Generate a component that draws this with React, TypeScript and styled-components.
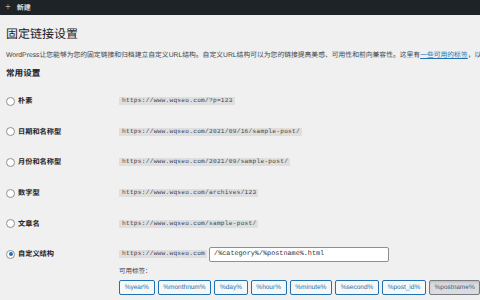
import * as React from "react";
import styled, { createGlobalStyle } from "styled-components";

const GlobalStyle = createGlobalStyle`
  html, body {
    margin: 0;
    padding: 0;
    background: #f0f0f1;
    overflow: hidden;
  }
  body {
    width: 480px;
    height: 300px;
    font-family: "Liberation Sans", "Noto Sans CJK SC", sans-serif;
    color: #3c434a;
    text-rendering: geometricPrecision;
  }
`;

const AdminBar = styled.div`
  height: 15px;
  background: #1d2327;
  display: flex;
  align-items: center;
  padding-left: 5px;
  gap: 6px;
  color: #dcdcde;
  font-size: 7px;
  font-weight: bold;
`;

const Plus = styled.span`
  font-size: 10px;
  font-weight: normal;
  line-height: 1;
  color: #a7aaad;
`;

const Content = styled.div`
  padding: 0 0 0 6px;
`;

const Title = styled.h1`
  margin: 12px 0 0;
  font-size: 12px;
  font-weight: 400;
  line-height: 14px;
  color: #1d2327;
`;

const Description = styled.p`
  margin: 10px 0 0;
  font-size: 6.8px;
  line-height: 9px;
  white-space: nowrap;
`;

const Link = styled.a`
  color: #2271b1;
  text-decoration: underline;
`;

const SectionTitle = styled.h2`
  margin: 8px 0 0;
  font-size: 8.6px;
  font-weight: 700;
  line-height: 11px;
  color: #1d2327;
`;

const Options = styled.div`
  margin-top: 7px;
  display: grid;
  grid-template-columns: 113px 1fr;
  grid-auto-rows: auto;
`;

const LabelCell = styled.label`
  display: flex;
  align-items: center;
  height: 30.6px;
  gap: 3px;
  font-size: 7.2px;
  font-weight: 700;
  color: #1d2327;
`;

const Radio = styled.span<{ $checked?: boolean }>`
  width: 7px;
  height: 7px;
  border-radius: 50%;
  border: 1px solid #8c8f94;
  background: #fff;
  display: flex;
  align-items: center;
  justify-content: center;
  &::after {
    content: "";
    width: 4px;
    height: 4px;
    border-radius: 50%;
    background: ${(p) => (p.$checked ? "#2271b1" : "transparent")};
  }
`;

const ValueCell = styled.div`
  display: flex;
  align-items: center;
  height: 30.6px;
`;

const Code = styled.code`
  font-family: "Liberation Mono", "DejaVu Sans Mono", monospace;
  font-size: 6.15px;
  letter-spacing: 0.27px;
  line-height: 8px;
  height: 8px;
  padding: 0 2px 0 3px;
  background: #dfdfe0;
  color: #3c434a;
  white-space: nowrap;
`;

const CustomCell = styled.div`
  display: flex;
  flex-direction: column;
`;

const CustomLine = styled.div`
  display: flex;
  align-items: center;
  gap: 2px;
  height: 30.6px;
`;

const StructureInput = styled.div`
  width: 170px;
  height: 13px;
  padding: 0 4px;
  background: #fff;
  border: 1px solid #8c8f94;
  border-radius: 2px;
  display: flex;
  align-items: center;
  font-family: "Liberation Mono", "DejaVu Sans Mono", monospace;
  font-size: 6.8px;
  color: #2c3338;
  white-space: nowrap;
`;

const TagsLabel = styled.div`
  margin-top: -3px;
  font-size: 6.5px;
  line-height: 9px;
  color: #3c434a;
`;

const Tags = styled.div`
  margin-top: 4px;
  display: flex;
  gap: 3px;
  white-space: nowrap;
`;

const TagButton = styled.span<{ $active?: boolean }>`
  display: inline-flex;
  align-items: center;
  height: 13px;
  padding: 0 4.7px;
  border: 1px solid ${(p) => (p.$active ? "#787c82" : "#2271b1")};
  border-radius: 2px;
  background: ${(p) => (p.$active ? "#dcdcde" : "#f6f7f7")};
  color: ${(p) => (p.$active ? "#3a5a7c" : "#2271b1")};
  font-size: 6.5px;
  box-shadow: ${(p) => (p.$active ? "inset 0 2px 4px -3px #787c82" : "none")};
  flex-shrink: 0;
`;

const presets = [
  { label: "朴素", url: "https://www.wqseo.com/?p=123" },
  { label: "日期和名称型", url: "https://www.wqseo.com/2021/09/16/sample-post/" },
  { label: "月份和名称型", url: "https://www.wqseo.com/2021/09/sample-post/" },
  { label: "数字型", url: "https://www.wqseo.com/archives/123" },
  { label: "文章名", url: "https://www.wqseo.com/sample-post/" },
];

const tags = [
  "%year%",
  "%monthnum%",
  "%day%",
  "%hour%",
  "%minute%",
  "%second%",
  "%post_id%",
  "%postname%",
  "%category%",
];

export default function App() {
  return (
    <>
      <GlobalStyle />
      <AdminBar>
        <Plus>+</Plus>
        <span>新建</span>
      </AdminBar>
      <Content>
        <Title>固定链接设置</Title>
        <Description>
          WordPress让您能够为您的固定链接和归档建立自定义URL结构。自定义URL结构可以为您的链接提高美感、可用性和前向兼容性。这里有
          <Link>一些可用的标签</Link>，以及一些入门指导。
        </Description>
        <SectionTitle>常用设置</SectionTitle>
        <Options>
          {presets.map((p) => (
            <React.Fragment key={p.label}>
              <LabelCell>
                <Radio />
                {p.label}
              </LabelCell>
              <ValueCell>
                <Code>{p.url}</Code>
              </ValueCell>
            </React.Fragment>
          ))}
          <LabelCell>
            <Radio $checked />
            自定义结构
          </LabelCell>
          <CustomCell>
            <CustomLine>
              <Code>https://www.wqseo.com</Code>
              <StructureInput>/%category%/%postname%.html</StructureInput>
            </CustomLine>
            <TagsLabel>可用标签：</TagsLabel>
            <Tags>
              {tags.map((t) => (
                <TagButton key={t} $active={t === "%postname%"}>
                  {t}
                </TagButton>
              ))}
            </Tags>
          </CustomCell>
        </Options>
      </Content>
    </>
  );
}
